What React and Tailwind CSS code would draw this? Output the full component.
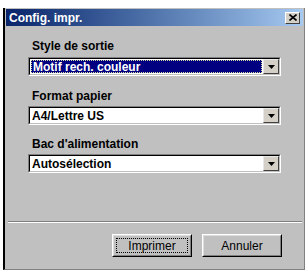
import React from 'react';

const font = { fontFamily: '"Liberation Sans", Arial, sans-serif' };

// Win2000-style combo box with a sunken frame
const Combo = ({ value, selected }) => (
    <div className="ml-[23px] w-[253px] h-[19px] border border-t-[#808080] border-l-[#808080] border-b-white border-r-white">
        <div className="h-full flex border border-t-black border-l-black border-b-[#c0c0c0] border-r-[#c0c0c0] bg-white">
            <div className="flex-1 p-[1px] flex">
                <div
                    className={
                        selected
                            ? 'flex-1 flex items-center pl-[2px] bg-[#000080] text-white outline-1 outline-dotted outline-[#d8d8a0] -outline-offset-1'
                            : 'flex-1 flex items-center pl-[1px] text-black'
                    }
                >
                    <span className="text-[12px] font-bold leading-[14px]">{value}</span>
                </div>
            </div>
            <div className="w-[16px] h-full bg-[#d4d0c8] border border-t-[#e8e8e8] border-l-[#e8e8e8] border-b-[#404040] border-r-[#404040] flex items-center justify-center">
                <svg width="7" height="4" viewBox="0 0 7 4">
                    <path d="M0 0H7L3.5 4Z" fill="#000" />
                </svg>
            </div>
        </div>
    </div>
);

const Label = ({ children }) => (
    <div className="ml-[27px] text-[12px] font-bold leading-[14px] text-black">{children}</div>
);

const Button = ({ children, focused }) => (
    <div className="w-[80px] h-[23px] border border-t-white border-l-white border-b-black border-r-black">
        <div className="h-full p-[2px] border border-t-[#dcdcdc] border-l-[#dcdcdc] border-b-[#808080] border-r-[#808080] bg-[#c0c0c0]">
            <div
                className={
                    focused
                        ? 'h-full flex items-center justify-center border border-dotted border-black'
                        : 'h-full flex items-center justify-center'
                }
            >
                <span className="text-[12px] leading-[14px] text-black">{children}</span>
            </div>
        </div>
    </div>
);

export default function App() {
    return (
        <div className="w-[306px] h-[270px] bg-white pt-[8px] pl-[3px] overflow-hidden" style={font}>
            <div className="w-[302px] h-[262px] bg-[#c0c0c0] border-l-2 border-l-black border-r border-r-[#808080] border-b border-b-[#808080] flex flex-col">
                {/* title bar */}
                <div className="h-[17px] mx-[1px] mt-[1px] flex items-center justify-between bg-gradient-to-r from-[#0a246a] to-[#a6caf0]">
                    <span className="pl-[3px] text-[12px] font-bold leading-[14px] text-white">Config. impr.</span>
                    <div className="mr-[3px] w-[15px] h-[12px] bg-[#d4d0c8] border border-t-white border-l-white border-b-[#404040] border-r-[#404040] flex items-center justify-center">
                        <svg width="8" height="7" viewBox="0 0 8 7">
                            <path d="M0.5 0.5L7.5 6.5M7.5 0.5L0.5 6.5" stroke="#000" strokeWidth="1.6" />
                        </svg>
                    </div>
                </div>

                <div className="flex flex-col pt-[13px]">
                    <Label>Style de sortie</Label>
                    <div className="h-[4px]" />
                    <Combo value="Motif rech. couleur" selected />
                    <div className="h-[13px]" />
                    <Label>Format papier</Label>
                    <div className="h-[3px]" />
                    <Combo value="A4/Lettre US" />
                    <div className="h-[12px]" />
                    <Label>Bac d'alimentation</Label>
                    <div className="h-[3px]" />
                    <Combo value="Autosélection" />
                </div>

                {/* separator */}
                <div className="mt-[48px] ml-[3px] mr-[2px] h-[1px] bg-[#808080]" />
                <div className="ml-[3px] mr-[2px] h-[1px] bg-white" />

                <div className="mt-[11px] flex justify-end gap-[10px] pr-[22px]">
                    <Button focused>Imprimer</Button>
                    <Button>Annuler</Button>
                </div>
            </div>
        </div>
    );
}
